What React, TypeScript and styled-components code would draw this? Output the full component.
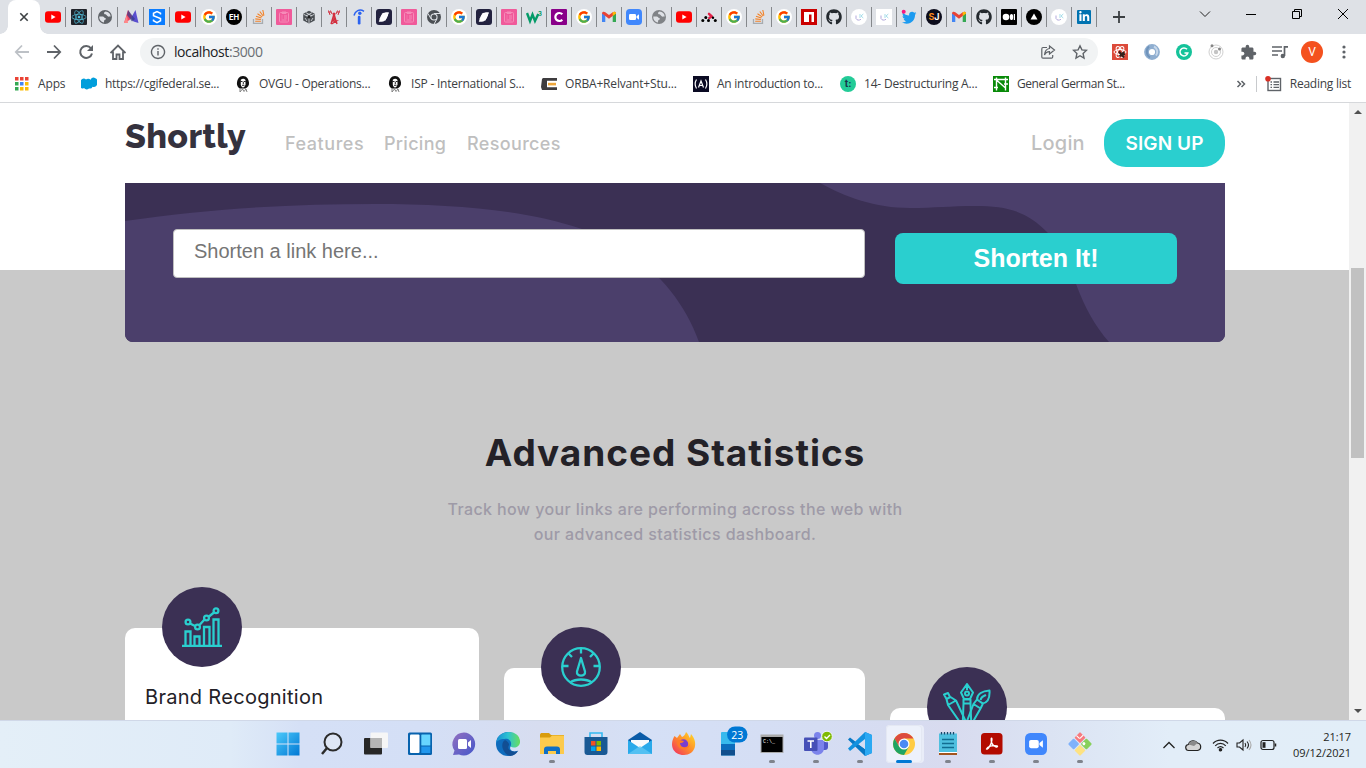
import React from "react";
import styled, { createGlobalStyle } from "styled-components";
import { FaReact, FaGithub, FaTwitter, FaLinkedinIn } from "react-icons/fa";
import { MdExtension } from "react-icons/md";
import { FcGoogle } from "react-icons/fc";

const GlobalStyle = createGlobalStyle`
  * { box-sizing: border-box; }
  body { margin: 0; overflow: hidden; font-family: "Open Sans", "Noto Sans", sans-serif; }
  svg { display: block; flex: none; }
`;

const brandFont = `Inter, "Open Sans", sans-serif`;

const Screen = styled.div`
  width: 1366px;
  height: 768px;
  display: flex;
  flex-direction: column;
  overflow: hidden;
  background: #fff;
`;

/* ---------- browser chrome ---------- */

const TabStrip = styled.div`
  height: 34px;
  flex: none;
  display: flex;
  background: #dee1e6;
`;

const ActiveTab = styled.div`
  width: 32px;
  margin-left: 8px;
  border-radius: 8px 8px 0 0;
  background: #fff;
  display: flex;
  align-items: center;
  justify-content: center;
  position: relative;
  &::before, &::after {
    content: "";
    position: absolute;
    bottom: 0;
    width: 8px;
    height: 8px;
  }
  &::before { left: -8px; background: radial-gradient(circle at 0 0, transparent 7.5px, #fff 8px); }
  &::after { right: -8px; background: radial-gradient(circle at 100% 0, transparent 7.5px, #fff 8px); }
`;

const Tab = styled.div<{ $wide?: boolean }>`
  width: ${(p) => (p.$wide ? 26 : 25)}px;
  padding: 9px 0 0 ${(p) => (p.$wide ? 5 : 4)}px;
  background: linear-gradient(#85888c, #85888c) right 7px / 1px 20px no-repeat;
`;

const NewTab = styled.div`
  width: 44px;
  display: flex;
  align-items: center;
  justify-content: center;
`;

const WindowButtons = styled.div`
  margin-left: auto;
  display: flex;
  padding-bottom: 6px;
`;

const WindowButton = styled.div`
  width: 46px;
  display: flex;
  align-items: center;
  justify-content: center;
`;

const Toolbar = styled.div`
  height: 36px;
  flex: none;
  display: flex;
  align-items: center;
  padding-left: 6px;
`;

const ToolButton = styled.div`
  width: 32px;
  display: flex;
  align-items: center;
  justify-content: center;
`;

const Omnibox = styled.div`
  width: 958px;
  height: 28px;
  margin: 0 6px;
  border-radius: 14px;
  background: #f1f3f4;
  display: flex;
  align-items: center;
  padding: 0 2px 0 10px;
`;

const Address = styled.div`
  flex: 1;
  padding: 0 0 2px 8px;
  font-size: 14px;
  letter-spacing: -0.42px;
  color: #202124;
  span { color: #6a6e73; }
`;

const Avatar = styled.div`
  width: 22px;
  height: 22px;
  border-radius: 50%;
  background: #f4511e;
  color: #fff;
  font: 12px/22px Roboto, sans-serif;
  text-align: center;
`;

const BookmarkBar = styled.div`
  height: 33px;
  flex: none;
  display: flex;
  padding: 0 15px 5px 14px;
  border-bottom: 1px solid #d6d8db;
`;

const Bookmark = styled.div<{ $width?: number; $spacing: number }>`
  width: ${(p) => (p.$width ? p.$width + "px" : "auto")};
  display: flex;
  align-items: center;
  gap: 8px;
  font-size: 12px;
  letter-spacing: ${(p) => p.$spacing}px;
  color: #3c4043;
  white-space: nowrap;
`;

const BookmarkEnd = styled.div`
  margin-left: auto;
  display: flex;
  align-items: center;
`;

const BarDivider = styled.div`
  width: 1px;
  height: 16px;
  margin: 0 8px 0 10px;
  background: #c8cacd;
`;

/* ---------- web page ---------- */

const Viewport = styled.div`
  height: 617px;
  flex: none;
  display: flex;
  overflow: hidden;
`;

const Page = styled.div`
  width: 1349px;
  height: 617px;
  overflow: hidden;
  background: linear-gradient(#fff 167px, #c9c9c9 167px);
`;

const Container = styled.div`
  width: 1100px;
  margin-left: 125px;
`;

const Nav = styled.nav`
  height: 80px;
  display: flex;
  align-items: center;
  font-family: ${brandFont};
`;

const Logo = styled.div`
  width: 160px;
  padding-bottom: 14px;
  font: 800 34px/40px Raleway, Lato, sans-serif;
  letter-spacing: 0.35px;
  color: #35323e;
`;

const NavLink = styled.a<{ $width: number; $size: number; $spacing: number }>`
  width: ${(p) => p.$width}px;
  font-size: ${(p) => p.$size}px;
  font-weight: 500;
  letter-spacing: ${(p) => p.$spacing}px;
  color: #bfbfbf;
`;

const NavEnd = styled.div`
  margin-left: auto;
  display: flex;
  align-items: center;
`;

const SignUp = styled.button`
  width: 121px;
  height: 48px;
  border: 0;
  padding: 0;
  border-radius: 22px;
  background: #2acfcf;
  color: #fff;
  font: 600 19px ${brandFont};
  letter-spacing: 0.1px;
`;

const ShortenPanel = styled.section`
  height: 159px;
  position: relative;
  border-radius: 0 0 8px 8px;
  overflow: hidden;
  background: #3b3054;
`;

const PanelWaves = styled.svg`
  position: absolute;
  inset: 0;
`;

const ShortenForm = styled.div`
  position: relative;
  display: flex;
  gap: 30px;
  padding: 46px 48px 0;
`;

const LinkInput = styled.input`
  width: 692px;
  height: 49px;
  border: 1px solid #bfbfbf;
  border-radius: 4px;
  padding: 0 20px 5px;
  background: #fff;
  font: 20px "Liberation Sans", Arial, sans-serif;
  &::placeholder { color: #757575; }
`;

const ShortenButton = styled.button`
  width: 282px;
  height: 51px;
  margin-top: 4px;
  border: 0;
  border-radius: 8px;
  background: #2acfcf;
  color: #fff;
  font: bold 25px "Liberation Sans", Arial, sans-serif;
`;

const Heading = styled.h2`
  margin: 87px 0 0;
  text-align: center;
  font: 700 37px/48px ${brandFont};
  letter-spacing: 0.95px;
  color: #232127;
`;

const Lead = styled.p`
  margin: 20px 0 0;
  text-align: center;
  font: 500 16px/25px ${brandFont};
  letter-spacing: 0.4px;
  color: #9e9aa7;
`;

const Cards = styled.div`
  display: grid;
  grid-template-columns: 354px 361px 335px;
  gap: 25px;
  align-items: start;
  padding-top: 81px;
`;

const Card = styled.article<{ $drop: number }>`
  position: relative;
  height: 260px;
  margin-top: ${(p) => p.$drop}px;
  padding: 54px 20px 0;
  border-radius: 10px;
  background: #fff;
`;

const CardBadge = styled.div`
  position: absolute;
  top: -41px;
  left: 37px;
  width: 80px;
  height: 80px;
  border-radius: 50%;
  background: #3b3054;
  display: flex;
  align-items: center;
  justify-content: center;
`;

const CardTitle = styled.h3`
  margin: 0;
  font: 400 20px/30px ${brandFont};
  letter-spacing: 0.3px;
  color: #232127;
`;

const ScrollTrack = styled.div`
  width: 17px;
  height: 617px;
  background: #f1f1f1;
  display: flex;
  flex-direction: column;
  align-items: center;
  padding: 6px 0;
`;

const ScrollThumb = styled.div`
  width: 13px;
  height: 190px;
  margin-top: 154px;
  margin-bottom: auto;
  background: #c1c1c1;
`;

/* ---------- taskbar ---------- */

const Taskbar = styled.div`
  height: 48px;
  flex: none;
  display: flex;
  padding-left: 266px;
  border-top: 1px solid #d0d8e8;
  background: linear-gradient(90deg, #e4eff8 0, #dfebf8 230px, #d5e0f6 300px, #d4dff6 420px, #d7ddf0 540px, #d5e0f6 650px, #d5ddf3 820px, #d8dbef 950px, #dbe3f3 1050px, #e2edf8 1170px, #e2eef8 100%);
`;

const TaskItem = styled.div`
  width: 44px;
  height: 47px;
  padding-top: 4px;
  display: flex;
  flex-direction: column;
  align-items: center;
`;

const TaskIcon = styled.div<{ $active?: boolean }>`
  width: 36px;
  height: 38px;
  border-radius: 4px;
  display: flex;
  align-items: center;
  justify-content: center;
  background: ${(p) => (p.$active ? "#edf1fb" : "transparent")};
  box-shadow: ${(p) => (p.$active ? "inset 0 0 0 1px #e4e8f3, 2px 0 0 0 #e9edf8" : "none")};
`;

const Indicator = styled.div<{ $kind: "none" | "open" | "active" }>`
  width: ${(p) => (p.$kind === "active" ? 16 : 6)}px;
  height: 3px;
  margin-top: -3px;
  border-radius: 2px;
  background: ${(p) => (p.$kind === "active" ? "#0078d4" : p.$kind === "open" ? "#7f838c" : "transparent")};
`;

const Tray = styled.div`
  margin-left: auto;
  padding-right: 15px;
  display: flex;
  align-items: center;
`;

const Clock = styled.div`
  width: 68px;
  text-align: right;
  font-size: 11px;
  line-height: 16px;
  letter-spacing: -0.05px;
  color: #1d1f22;
`;

/* ---------- favicons ---------- */

type Fav = { box?: string; round?: number; children?: React.ReactNode };
const Favicon = ({ box, round = 0, children }: Fav) => (
  <svg width="16" height="16" viewBox="0 0 16 16">
    {box && <rect width="16" height="16" rx={round} fill={box} />}
    {children}
  </svg>
);

const iconText = (value: string, fill: string, size: number, x = 8, y = 11) => (
  <text x={x} y={y} fontSize={size} fontWeight="700" fill={fill} textAnchor="middle" fontFamily="Inter, sans-serif">{value}</text>
);

const YouTube = () => (
  <Favicon><rect y="2.3" width="16" height="11.4" rx="3" fill="#f00" /><path d="M6.3 5.6v4.8L10.6 8z" fill="#fff" /></Favicon>
);
const ReactTab = () => <Favicon box="#20232a" round={1}><FaReact x="0.5" y="0.5" size={15} color="#53c1de" /></Favicon>;
const Globe = ({ color = "#5f6368" }: { color?: string }) => (
  <Favicon><circle cx="8" cy="8" r="7" fill={color} />
    <path d="M2.300 7.500h3.500c1.200.2 1.500 1.500 2.700 1.700.8.2.5 1.300-.5 1.500-.8.1-.9.800-1 2.800C4 13 2 10.500 2.300 7.500zM8.500 2.500c-1.200.6-1.800 1.300-1.300 2.300.6 1 1.700.5 2.300 1.200.6.8 1.300 1.800 2.700 1.600l1.500-.2c-.2-2.700-2.200-4.600-5.200-4.900z" fill="#dee1e6" />
  </Favicon>
);
const MTab = () => (
  <Favicon><path d="M1 14 5 1l4 6.500-2.500 3.500z" fill="#ef4565" /><path d="M5 14h-4l3-8z" fill="#f88" /><path d="M8 9l4.500-8L15.500 14l-5-1.500z" fill="#5a4fcf" /><path d="M5 1l7 9-3 2.500L4 6z" fill="#3a3a88" opacity=".75" /></Favicon>
);
const STab = () => (
  <Favicon box="#0a7cff"><path d="M11.500 5.500V4.300L8 2.500 4.500 4.300v2.400L11.500 9.500v2.200L8 13.600l-3.500-1.900v-1.200" fill="none" stroke="#fff" strokeWidth="1.500" /></Favicon>
);
const Google = () => <Favicon box="#fff" round={8}><FcGoogle x="1" y="1" size={14} /></Favicon>;
const EH = () => <Favicon box="#000" round={8}>{iconText("EH", "#fff", 7.5, 8, 10.8)}</Favicon>;
const StackOverflow = () => (
  <Favicon><path d="M2.500 10v4.300h9V10" fill="none" stroke="#a7abb0" strokeWidth="1.300" />
    <path d="M4.200 12.300h5.700M4.300 9.900l5.600.6M5 7.300l5.400 1.800M6.500 4.700l4.700 3.200M8.800 2.500l3.400 4.500M11.800 1l1.100 5.500" stroke="#f48024" strokeWidth="1.100" /></Favicon>
);
const Pink = () => (
  <Favicon box="#f05a9a" round={1}><g fill="none" stroke="#f68bb8" strokeWidth="1"><rect x="3.500" y="3.500" width="9" height="9.500" rx="1" /><path d="M6 3h4v1.500H6zM5.500 7h1M8 7h3M5.500 9h1M8 9h3M5.500 11h5" /></g></Favicon>
);
const Cube = () => (
  <Favicon><path d="M8 1.800l5.800 3v6.700L8 14.600l-5.800-3.100V4.800z" fill="#4b4f54" /><path d="M8 8v6M8 8 2.500 5.200M8 8l5.500-2.800M5 3.700l6 3.200M11 3.700 5 6.900M4 9l2 3M12 9l-2 3" stroke="#dee1e6" strokeWidth=".8" /><circle cx="8" cy="8" r="1.500" fill="#222" /></Favicon>
);
const Tower = () => (
  <Favicon><g fill="none" stroke="#d32f3f"><path d="M8 5 5 15M8 5l3 10M6.500 9h3M6 12h4.500l-5 3M9.500 9l-3 3" strokeWidth="1.400" /><path d="M4.500 1.500 6 5M2.500 1.500 4 6M11.500 1.500 10 5M13.500 1.500 12 6M2 3h3M11 3h3" strokeWidth="1" /></g><circle cx="8" cy="5" r="1.500" fill="#d32f3f" /></Favicon>
);
const Indeed = () => (
  <Favicon><rect x="6.800" y="6.800" width="2.700" height="8.700" rx="1.200" fill="#2b62f0" /><circle cx="8.800" cy="4.300" r="1.700" fill="#2b62f0" /><path d="M3 6.500C4 2 8.500-.5 13 2.300" fill="none" stroke="#2b62f0" strokeWidth="1.500" /></Favicon>
);
const Crescent = () => (
  <Favicon box="#23223f" round={3}><path d="M3.200 9.500C4 5 7 3 12.300 3.200c.8 0 .9.8.4 1.200-.7.700-.6 1.500-.7 2.600C11.600 10.500 9 12.900 3.500 12.800c-.8 0-.9-.8-.3-1.300.5-.6.300-1.200 0-2z" fill="#fff" /><path d="M2.500 9.500c1.500-1 1.300-3.200 3-4.500M13.200 6.300c-1.500 1.200-1.200 3.200-3 4.700" stroke="#23223f" strokeWidth="1.300" fill="none" /></Favicon>
);
const ChromeGray = () => (
  <Favicon><circle cx="8" cy="8" r="7" fill="#4b4f54" /><circle cx="8" cy="8" r="3.600" fill="#dee1e6" /><circle cx="8" cy="8" r="2.500" fill="#4b4f54" /><path d="M8 4.500h6.500M5 9.800 2 4.500M11 9.800l-3 5.400" stroke="#dee1e6" strokeWidth="1" /></Favicon>
);
const W3 = () => (
  <Favicon><path d="M1 4l3 8 2.500-6.500L9 12l3.300-7" fill="none" stroke="#049b68" strokeWidth="2.400" />{iconText("3", "#049b68", 6, 14, 6.5)}</Favicon>
);
const CTab = () => <Favicon box="#890089" round={1}><path d="M11.300 5.300A4 4 0 1 0 11.300 10.700" fill="none" stroke="#fff" strokeWidth="2.200" /></Favicon>;
const Gmail = () => (
  <Favicon><path d="M1 13V4l3.300 2.500V13z" fill="#4285f4" /><path d="M15 13V4l-3.300 2.500V13z" fill="#34a853" /><path d="M1 4.500C1 2.500 3 2.300 4.300 3.300L8 6.100l3.700-2.800C13 2.300 15 2.500 15 4.500L8 9.800z" fill="#ea4335" /><path d="M11.700 3.300C13 2.300 15 2.500 15 4.500L11.700 7z" fill="#fbbc04" /></Favicon>
);
const Zoom = ({ size = 16 }: { size?: number }) => (
  <svg width={size} height={size} viewBox="0 0 16 16"><rect width="16" height="16" rx="3.800" fill="#4087fc" /><rect x="3" y="5" width="7" height="6" rx="1.300" fill="#fff" /><path d="M10.500 7.300 13 5.300v5.400l-2.500-2z" fill="#fff" /></svg>
);
const Router = () => (
  <Favicon><path d="M8 4.800l2.800 2.700L8.300 9" stroke="#e32249" strokeWidth="2.500" strokeLinecap="round" strokeLinejoin="round" fill="none" /><circle cx="1.800" cy="11.500" r="1.500" /><circle cx="4.800" cy="8.500" r="1.500" /><circle cx="7.500" cy="11.500" r="1.500" /><circle cx="12" cy="8.800" r="1.200" /><circle cx="14.300" cy="11.500" r="1.500" /></Favicon>
);
const Npm = () => <Favicon box="#cb0000"><path d="M3 3h10v10h-2.500V5.500H8V13H3z" fill="#fff" /></Favicon>;
const GitHub = () => <Favicon><FaGithub size={16} color="#24292e" /></Favicon>;
const Faint = ({ square }: { square?: boolean }) => (
  <Favicon box="#fff" round={square ? 0 : 8}><path d="M5 6.500v3c1 2 3 2 5 .8" fill="none" stroke="#b3a9dc" strokeWidth="1" /><path d="M9 5v4M12.300 5 10 7l2.300 2" fill="none" stroke="#a5ddea" strokeWidth="1" /></Favicon>
);
const Twitter = () => <Favicon><FaTwitter x="1" y="1.500" size={14.500} color="#1d9bf0" /><circle cx="2.700" cy="2.700" r="2" fill="#f91880" /></Favicon>;
const SJ = () => <Favicon box="#0c0c1c" round={8}>{iconText("S", "#f7861c", 9, 5.4, 11.2)}{iconText("J", "#fff", 9, 10.8, 11.2)}</Favicon>;
const Medium = () => <Favicon box="#000" round={1}><circle cx="5" cy="8" r="3.300" fill="#fff" /><ellipse cx="10.500" cy="8" rx="1.700" ry="3.100" fill="#fff" /><rect x="12.800" y="5" width="1.200" height="6" fill="#fff" /></Favicon>;
const Vercel = () => <Favicon box="#000" round={8}><path d="M8 4.500 11.500 10.500h-7z" fill="#fff" /></Favicon>;
const LinkedIn = () => <Favicon><rect x="1" y="1" width="14" height="14" rx="1" fill="#0073b1" /><FaLinkedinIn x="2.500" y="2" size={11.500} color="#fff" /></Favicon>;

const wideTabs = [YouTube, ReactTab, Globe, MTab, STab, YouTube, Google];
const GlobeLight = () => <Globe color="#808387" />;
const FaintSquare = () => <Faint square />;
const FaintRound = () => <Faint />;
const narrowTabs = [
  EH, StackOverflow, Pink, Cube, Tower, Indeed, Crescent, Pink, ChromeGray, Google, Crescent, Pink,
  W3, CTab, Google, Gmail, Zoom, GlobeLight, YouTube, Router, Google, StackOverflow, Google, Npm,
  GitHub, FaintRound, FaintSquare, Twitter, SJ, Gmail, GitHub, Medium, Vercel, FaintRound, LinkedIn,
];

/* ---------- toolbar and bookmark icons ---------- */

const Line = ({ d, size = 16, color = "#5f6368", width = 1.6 }: { d: string; size?: number; color?: string; width?: number }) => (
  <svg width={size} height={size} viewBox={`0 0 ${size} ${size}`} fill="none" stroke={color} strokeWidth={width}><path d={d} /></svg>
);

const AppsGrid = () => {
  const colors = ["#ea4335", "#ea4335", "#ea4335", "#34a853", "#4285f4", "#fbbc04", "#34a853", "#fbbc04", "#fbbc04"];
  return <Favicon>{colors.map((c, i) => <rect key={i} x={1 + (i % 3) * 5} y={1 + Math.floor(i / 3) * 5} width="3.500" height="3.500" fill={c} />)}</Favicon>;
};
const Salesforce = () => <Favicon><path d="M0 7.500a3.200 3.200 0 0 1 5-3.900 3 3 0 0 1 4.500.2 3.300 3.300 0 0 1 6.500 3.200 3.200 3.200 0 0 1-4.500 3.700 2.800 2.800 0 0 1-3.500 1.700A3.500 3.500 0 0 1 3 12 2.600 2.600 0 0 1 0 7.500z" fill="#009edb" /></Favicon>;
const Portrait = () => (
  <Favicon><path d="M8 0C4 0 2.500 3 2 6.500c-.5 3 1.500 5.500 3 6h5.500c2-1 4-3 3.500-6C13.500 3 12 0 8 0z" fill="#111" /><path d="M5.800 3.800c1.500-1.500 3.500-1.500 4.700.2v4.500c-.5 2-1.500 3-2.500 3S5.800 10 5.800 8.500z" fill="#fff" /><path d="M5.500 5.500h2M8.700 5.500h2M8.300 6v2.200M7 9.300h2.500" stroke="#111" strokeWidth=".9" /><path d="M5 12.500V16l2.500-3L9 15.500l2-2.500 1 3" fill="none" stroke="#777" strokeWidth=".9" /></Favicon>
);
const Orba = () => <Favicon><path d="M2 2h14v2.800H6v6.400h10V14H1L0 11 1 3z" fill="#3e3c3f" /><rect x="7" y="6.800" width="8" height="2.600" fill="#eda63b" /></Favicon>;
const FreeCode = () => <Favicon box="#0a0a23"><path d="M3.500 3.500c-1.800 3-1.800 6 0 9M12.500 3.500c1.800 3 1.800 6 0 9M5.500 11.500 8 5l2.500 6.500M6.300 9.500h3.400" fill="none" stroke="#fff" strokeWidth="1.200" /></Favicon>;
const TealT = () => <Favicon box="#23cb97" round={8}>{iconText("t:", "#17324a", 9.5, 8, 11.3)}</Favicon>;
const German = () => <Favicon box="#088a08"><path d="M1 3.500h14M3.500 1.500v13M12.500 1.500v13M3.500 4l9 8M1 11.500h4M11 8h4" stroke="#fff" strokeWidth="1.400" /></Favicon>;

const bookmarks = [
  { Icon: AppsGrid, label: "Apps", width: 67, spacing: -0.15 },
  { Icon: Salesforce, label: "https://cgifederal.se...", width: 154, spacing: -0.28 },
  { Icon: Portrait, label: "OVGU - Operations...", width: 152, spacing: -0.24 },
  { Icon: Portrait, label: "ISP - International S...", width: 154, spacing: -0.22 },
  { Icon: Orba, label: "ORBA+Relvant+Stu...", width: 152, spacing: -0.17 },
  { Icon: FreeCode, label: "An introduction to...", width: 147, spacing: -0.25 },
  { Icon: TealT, label: "14- Destructuring A...", width: 153, spacing: -0.2 },
  { Icon: German, label: "General German St...", width: 150, spacing: -0.42 },
];

const extensions = [
  <Favicon key="bug" box="#dc4a3a"><g fill="none" stroke="#fff" strokeWidth="1"><ellipse cx="8" cy="8" rx="6" ry="2.500" /><ellipse cx="8" cy="8" rx="6" ry="2.500" transform="rotate(60 8 8)" /><ellipse cx="8" cy="8" rx="6" ry="2.500" transform="rotate(120 8 8)" /></g><path d="M7 7.500l5 6M12 8l-4.500 4.500M8 10.300h5" stroke="#35201c" strokeWidth="2" /></Favicon>,
  <Favicon key="ring"><circle cx="8" cy="8" r="5.500" fill="none" stroke="#8faed0" strokeWidth="4.800" /><path d="M5 2.500a7 7 0 0 0 1 11" fill="none" stroke="#6f93bb" strokeWidth="2" /><path d="M10 2.500a6 6 0 0 1 2 9" fill="none" stroke="#c6d7ea" strokeWidth="2" /></Favicon>,
  <Favicon key="grammar" box="#15c39a" round={8}><path d="M11 5.300A4 4 0 1 0 11.800 9H8.500" fill="none" stroke="#fff" strokeWidth="1.500" /></Favicon>,
  <Favicon key="orbit"><circle cx="8" cy="8" r="7" fill="none" stroke="#d0d0d0" /><circle cx="8" cy="8" r="4.500" fill="none" stroke="#d0d0d0" /><circle cx="8" cy="8" r="2.200" fill="#c4c4c4" /><circle cx="4" cy="1.800" r="1.500" fill="#858585" /><circle cx="11.500" cy="5" r="1.500" fill="#858585" /></Favicon>,
  <MdExtension key="puzzle" size={17} color="#5f6368" />,
  <svg key="queue" width="16" height="16" viewBox="0 0 16 16"><path d="M0 3h10M0 7h10M0 11h6M12.500 12V2.800H16" fill="none" stroke="#5f6368" strokeWidth="1.700" /><circle cx="10.800" cy="12" r="2.200" fill="#5f6368" /></svg>,
];

/* ---------- feature card icons ---------- */

const ChartIcon = () => (
  <svg width="40" height="40" viewBox="0 0 40 40" fill="none" stroke="#2acfcf" strokeWidth="2.300">
    <path d="M0 39h40M3.500 39V24.500h5V39M12.500 39V29.500h5V39M22 39V20h5.500V39M31.500 39V12.500h5V39" />
    <path d="M8 16.500l5 2.500M17.500 18l5-5.500M27 9.500l5-4" />
    <circle cx="6" cy="15" r="2.400" /><circle cx="15.500" cy="20" r="2.400" /><circle cx="24.500" cy="11" r="2.400" /><circle cx="34" cy="3.800" r="2.400" />
  </svg>
);
const GaugeIcon = () => (
  <svg width="40" height="40" viewBox="0 0 40 40" fill="none" stroke="#2acfcf" strokeWidth="2.300">
    <circle cx="20" cy="20" r="18.800" /><path d="M20 1v5.500M1 19h6.500M32.500 19H39M7.500 6.500l3.500 3.500M32.500 6.500 29 10M9 35.500c6-4 16-4 22 0" />
    <path d="M20 11l4 13.500c1 5.500-9 5.500-8 0z" strokeLinejoin="round" />
  </svg>
);
const PensIcon = () => (
  <svg width="48" height="48" viewBox="0 0 48 48" fill="none" stroke="#2acfcf" strokeWidth="2" strokeLinejoin="round">
    <path d="M24 1l6 8.500-3 6.500h-6l-3-6.500zM24 1v6M20.500 16.500h7v4h-7zM20.500 20.500 19.500 47h9L27.500 20.500" /><circle cx="24" cy="10.500" r="2" />
    <path d="M1 11.500l4-1.500 2 4-3.500 2zM3.500 16 7.500 14l5.500 3.500L24 41M3.500 16l1.500 6 16 23M5 22l8-4.500" />
    <path d="M46.500 7.500c-7 .5-12.500 3.500-12.500 9l5.500 4c5.500-1 7.500-5 7-13zM34 16.500l6 4-2.500 5-7-4.500zM30.500 21 21 46M37.500 25.500 27 44M43 12c-2 1-4.500 1-5.500 5" />
  </svg>
);

/* ---------- taskbar icons ---------- */

const Win = ({ children }: { children: React.ReactNode }) => <svg width="24" height="24" viewBox="0 0 24 24" overflow="visible">{children}</svg>;

const taskIcons: { icon: React.ReactNode; kind?: "open" | "active" }[] = [
  { icon: <Win><defs><linearGradient id="w" x1="0" y1="0" x2="1" y2="1"><stop stopColor="#4cc9fa" /><stop offset="1" stopColor="#0078d4" /></linearGradient></defs><path d="M.500.500h11v11H.500zM12.500.500h11v11h-11zM.500 12.500h11v11H.500zM12.500 12.500h11v11h-11z" fill="url(#w)" /></Win> },
  { icon: <Win><circle cx="13" cy="10" r="8.500" fill="#e5eaf3" fillOpacity=".6" stroke="#2b2b2b" strokeWidth="2" /><path d="M7 16l-5 6" stroke="#2b2b2b" strokeWidth="2.500" /></Win> },
  { icon: <Win><rect y="6" width="18" height="16.500" rx="1" fill="#272727" /><rect x="6.500" y=".500" width="17.500" height="15.500" rx="1" fill="#f6f6f6" /><rect x="6.500" y="6" width="11.500" height="10" fill="#b5b5b5" /></Win> },
  { icon: <Win><rect y=".500" width="24" height="22.500" rx="1.500" fill="#0863ae" /><rect x="2" y="2.500" width="9.500" height="18.500" rx="1" fill="#fff" /><rect x="13.300" y="2.500" width="9" height="11" rx=".5" fill="#67d5ff" /><path d="M13.300 14.500h9V21h-9z" fill="#2197ed" /></Win> },
  { icon: <Win><defs><linearGradient id="m" x1="0" y1="0" x2="1" y2="1"><stop stopColor="#9370c0" /><stop offset="1" stopColor="#4457ca" /></linearGradient></defs><path d="M12 .500A11.500 11.500 0 1 1 7 22.500L1 23l1.500-4.500A11.500 11.500 0 0 1 12 .500z" fill="url(#m)" /><rect x="6" y="7" width="9" height="10" rx="1.500" fill="#fff" /><path d="M16 10.500l3-2.500v8l-3-2.500z" fill="#fff" /></Win> },
  { icon: <Win><defs><linearGradient id="e" x1="0" x2="1"><stop stopColor="#168bd3" /><stop offset=".5" stopColor="#2cc3d2" /><stop offset="1" stopColor="#6ade5c" /></linearGradient></defs><circle cx="12" cy="12" r="12" fill="#0f6cbd" /><path d="M24.500 10v8l-3.500 1c-5 1.500-8-1.500-6.500-4.500z" fill="#d5e0f6" /><path d="M0 12C0-3 24-4 24 10c0 5-6 7-9.500 4.500 2-4.500-1-8.500-6-7.500C4 7 0 9 0 12z" fill="url(#e)" /><path d="M9 8c-5 3-3 13 5 16 4-.5 6-2 8-5-5 2-12-1-9-6 .5-2-2-4-4-5z" fill="#124e93" /></Win> },
  { icon: <Win><path d="M0 3c0-1.500 1-2 2-2h7l2 2h13v8H0z" fill="#d99c0b" /><path d="M0 5.500h10l2-2h12V22H0z" fill="#fcca4c" /><path d="M4 17.500c0-2 1-3 3-3h10c2 0 3 1 3 3V22h-4v-3H8v3H4z" fill="#0f6fc6" /></Win>, kind: "open" },
  { icon: <Win><path d="M6 6V1h12v5" fill="none" stroke="#35b9f1" strokeWidth="1.600" /><path d="M.500 5h23v15a3 3 0 0 1-3 3h-17a3 3 0 0 1-3-3z" fill="#195994" /><path d="M7 9h4.500v4.500H7z" fill="#f25022" /><path d="M12.500 9H17v4.500h-4.500z" fill="#7fba00" /><path d="M7 14.500h4.500V19H7z" fill="#00a4ef" /><path d="M12.500 14.500H17V19h-4.500z" fill="#ffb900" /></Win> },
  { icon: <Win><path d="M12 0l12 8v14H0V8z" fill="#0a5ba7" /><path d="M3 8h18v8H3z" fill="#f7f9fc" /><path d="M0 8l12 8 12-8v14H0z" fill="#29a9ea" /><path d="M0 22l12-8 12 8z" fill="#65caf5" opacity=".7" /></Win> },
  { icon: <Win><defs><linearGradient id="f" x1="1" y1="0" x2="0" y2="1"><stop stopColor="#ffe226" /><stop offset=".5" stopColor="#ff8a2c" /><stop offset="1" stopColor="#ef2869" /></linearGradient></defs><path d="M2.500 4l2.500 2 3-4 2 3c2-1 3-2 4-5 3 3 3 5 4 6l1-4c8 9 4 21-7 21C1 23-3 13 2.500 4z" fill="url(#f)" /><circle cx="11.500" cy="12" r="4.700" fill="#7a3ed0" /><path d="M5 9c3-2 5 0 7 0-1 2-3 2-4 2 0 5 7 6 10 1-1 8-14 7-13-3z" fill="#ff7b28" /></Win> },
  { icon: <Win><rect x="5" y="0" width="14" height="23.500" rx="1" fill="#38b9ed" /><path d="M5 12h14v11H5z" fill="#0c6cbd" /><path d="M5 18h14v5.500H5z" fill="#114f8d" /><rect x="11" y="-5.500" width="20.500" height="16" rx="8" fill="#0078d4" /><text x="21.300" y="6.500" fontSize="10.500" fill="#fff" textAnchor="middle" fontFamily="Open Sans, sans-serif">23</text></Win> },
  { icon: <Win><rect x=".500" y="2.500" width="23" height="18.500" fill="#aaa" /><rect x="1.500" y="5" width="21" height="15" fill="#000" /><text x="3" y="11" fontSize="5" fill="#fff" fontFamily="Liberation Mono, monospace">C:\_</text></Win>, kind: "open" },
  { icon: <Win><circle cx="13.500" cy="3.500" r="3.500" fill="#7b83eb" /><rect x="13" y="8" width="11" height="10" rx="3" fill="#5059c9" /><path d="M7 8h13v8c0 9-13 9-13 0z" fill="#7b83eb" /><rect x="0" y="5.500" width="13.500" height="13.500" rx="1" fill="#4650b7" /><path d="M3.500 9h6.500M6.800 9v7" stroke="#fff" strokeWidth="1.600" /><circle cx="23" cy="4.500" r="5.300" fill="#7fba00" stroke="#edf1fa" /><path d="M20.500 4.500l2 2 3.500-3.500" fill="none" stroke="#fff" strokeWidth="1.400" /></Win>, kind: "open" },
  { icon: <Win><path d="M17 0l7 3v18l-7 3L0 7.500l2-2 15 11.500z" fill="#0878c5" /><path d="M17 0l7 3v18l-7 3z" fill="#2ba9f3" /><path d="M17 7v10l-7-5z" fill="#d6def2" /><path d="M17 0L0 16.500l2 2.500L17 7z" fill="#1492df" /></Win>, kind: "open" },
  { icon: <Win><circle cx="12" cy="12" r="11" fill="#fc4" /><path d="M2.500 6.500A11 11 0 0 1 21.500 6.500H12L7.300 15z" fill="#dc4b3e" /><path d="M2.500 6.500A11 11 0 0 0 12 23l4.800-8.300-9.600 0z" fill="#1fa463" /><circle cx="12" cy="12" r="5.500" fill="#fff" /><circle cx="12" cy="12" r="4.300" fill="#4a8af4" /></Win>, kind: "active" },
  { icon: <Win><rect x="3" y="1.500" width="18" height="21" fill="#4fc0df" /><path d="M3 20.500h18V23H3z" fill="#a2541e" /><path d="M3 20h18v1H3z" fill="#fff" /><path d="M6 7.500h12M6 11.500h12M6 15.500h12" stroke="#126d91" strokeWidth="1.500" /><path d="M5.500 0v2.500M8.500 0v2.500M11.500 0v2.500M14.500 0v2.500M17.500 0v2.500" stroke="#17496b" strokeWidth="1.300" /></Win>, kind: "open" },
  { icon: <Win><rect x="1" y="1" width="21.500" height="21.500" rx="3.500" fill="#b30b00" /><path d="M6.500 17c1.200-2.200 5-3.700 10.500-3.200 1.500.8-.5 1.700-2 .7-2.500-1.500-4.200-4.500-3.800-8 .8-1.200 1.300 1.500-.2 5-1.200 3-3.500 6.500-4.500 5.500z" fill="none" stroke="#fff" strokeWidth="1.300" /></Win>, kind: "open" },
  { icon: <Zoom size={22} />, kind: "open" },
  { icon: <Win><g transform="rotate(45 12 12)"><rect x="3.500" y="3.500" width="8" height="8" rx="1" fill="#f77b7f" /><rect x="12.500" y="3.500" width="8" height="8" rx="1" fill="#88d05c" /><rect x="3.500" y="12.500" width="8" height="8" rx="1" fill="#7fb2fb" /><rect x="12.500" y="12.500" width="8" height="8" rx="1" fill="#fde283" /><path d="M3.500 8.500h4.500M8 3.500V8" stroke="#fff" strokeWidth="1.100" /><circle cx="14.500" cy="9" r="1.500" fill="#fff" /></g></Win>, kind: "open" },
];

const TrayIcon = styled.div<{ $width: number }>`
  width: ${(p) => p.$width}px;
  display: flex;
  justify-content: center;
`;

export default function App() {
  return (
    <Screen>
      <GlobalStyle />
      <TabStrip>
        <ActiveTab><Line d="M4.300 4.300l7.400 7.400M11.700 4.300l-7.400 7.400" color="#3c4043" /></ActiveTab>
        {wideTabs.map((Icon, i) => <Tab $wide key={i}><Icon /></Tab>)}
        {narrowTabs.map((Icon, i) => <Tab key={i}><Icon /></Tab>)}
        <NewTab><Line d="M8 2v12M2 8h12" color="#3c4043" width={1.8} /></NewTab>
        <WindowButtons>
          <WindowButton><Line d="M3 5.500l5 5 5-5" color="#222" width={1} /></WindowButton>
          <WindowButton><Line d="M3 8.500h10" color="#000" width={1} /></WindowButton>
          <WindowButton><Line d="M3.500 5.500h7v7h-7zM5.500 5.500v-2h7v7h-2" color="#000" width={1} /></WindowButton>
          <WindowButton><Line d="M3 3l10 10M13 3 3 13" color="#000" width={1} /></WindowButton>
        </WindowButtons>
      </TabStrip>

      <Toolbar>
        <ToolButton><Line d="M15 8H2M8 1.500 1.800 8 8 14.500" color="#bdc1c6" width={1.800} /></ToolButton>
        <ToolButton><Line d="M1 8h13M8 1.500 14.200 8 8 14.500" width={1.800} /></ToolButton>
        <ToolButton><svg width="16" height="16" viewBox="0 0 16 16"><path d="M13 4.300A6 6 0 1 0 14 9.500" fill="none" stroke="#5f6368" strokeWidth="2" /><path d="M15 1v6H9z" fill="#5f6368" /></svg></ToolButton>
        <ToolButton><Line d="M.500 9 8 1.500 15.500 9M3 7.500V15h3.500v-4.500h3V15H13V7.500" width={1.8} /></ToolButton>
        <Omnibox>
          <Line d="M8 1.500a6.500 6.500 0 1 0 .01 0M8 7v4.500M8 4.300v1.500" width={1.4} />
          <Address>localhost<span>:3000</span></Address>
          <ToolButton><Line d="M7 3.500H3Q1.800 3.500 1.800 5v8q0 1.200 1.200 1.200h8.500q1.200 0 1.200-1.200v-2M9.500 2l5 4-5 4V7.700Q6 7.700 4.500 11 5 5 9.500 4.500z" width={1.2} /></ToolButton>
          <ToolButton><Line d="M8 1.800l1.900 4.100 4.500.5-3.300 3.100.9 4.500-4-2.300L4 14l.9-4.500L1.600 6.400l4.500-.5z" width={1.4} /></ToolButton>
        </Omnibox>
        {extensions.map((icon, i) => <ToolButton key={i}>{icon}</ToolButton>)}
        <ToolButton><Avatar>V</Avatar></ToolButton>
        <ToolButton><svg width="16" height="16" viewBox="0 0 16 16" fill="#5f6368"><circle cx="8" cy="3" r="1.600" /><circle cx="8" cy="8" r="1.600" /><circle cx="8" cy="13" r="1.600" /></svg></ToolButton>
      </Toolbar>

      <BookmarkBar>
        {bookmarks.map(({ Icon, label, width, spacing }) => (
          <Bookmark key={label} $width={width} $spacing={spacing}><Icon />{label}</Bookmark>
        ))}
        <BookmarkEnd>
          <Line size={10} d="M1.500 2 4.500 5 1.500 8M5.500 2 8.500 5 5.500 8" width={1.500} />
          <BarDivider />
          <Bookmark $spacing={-0.25}>
            <svg width="17" height="16" viewBox="0 0 17 16"><rect x="3" y="2.500" width="12.500" height="12" fill="none" stroke="#5f6368" strokeWidth="1.400" /><path d="M5.500 6h1.500M8.500 6H14M5.500 8.700h1.500M8.500 8.700H14M5.500 11.400h1.500M8.500 11.400H14" stroke="#5f6368" strokeWidth="1.300" /><circle cx="3" cy="2.800" r="2.800" fill="#d93025" /></svg>
            Reading list
          </Bookmark>
        </BookmarkEnd>
      </BookmarkBar>

      <Viewport>
        <Page>
          <Container>
            <Nav>
              <Logo>Shortly</Logo>
              <NavLink $width={99} $size={18} $spacing={0.55}>Features</NavLink>
              <NavLink $width={83} $size={18} $spacing={0.3}>Pricing</NavLink>
              <NavLink $width={100} $size={18} $spacing={0.35}>Resources</NavLink>
              <NavEnd>
                <NavLink $width={73} $size={20} $spacing={0.2}>Login</NavLink>
                <SignUp>SIGN UP</SignUp>
              </NavEnd>
            </Nav>
            <ShortenPanel>
              <PanelWaves width="1100" height="159" viewBox="0 0 1100 159" fill="#4b3f6b">
                <path d="M0 38C90 25 170 21 250 21C330 21 400 27 457 46C500 60 552 97 574 159H0z" />
                <path d="M695 0C720 14 750 25 785 25C810 25 825 23 850 23C882 23 902 28 923 50C936 70 945 85 951 101C960 125 970 143 984 159H1100V0z" />
              </PanelWaves>
              <ShortenForm>
                <LinkInput placeholder="Shorten a link here..." />
                <ShortenButton>Shorten It!</ShortenButton>
              </ShortenForm>
            </ShortenPanel>
            <Heading>Advanced Statistics</Heading>
            <Lead>Track how your links are performing across the web with<br />our advanced statistics dashboard.</Lead>
            <Cards>
              <Card $drop={0}><CardBadge><ChartIcon /></CardBadge><CardTitle>Brand Recognition</CardTitle></Card>
              <Card $drop={40}><CardBadge><GaugeIcon /></CardBadge></Card>
              <Card $drop={80}><CardBadge><PensIcon /></CardBadge></Card>
            </Cards>
          </Container>
        </Page>
        <ScrollTrack>
          <svg width="8" height="5" viewBox="0 0 8 5"><path d="M0 5 4 1l4 4z" fill="#505050" /></svg>
          <ScrollThumb />
          <svg width="8" height="5" viewBox="0 0 8 5"><path d="M0 0l4 4 4-4z" fill="#505050" /></svg>
        </ScrollTrack>
      </Viewport>

      <Taskbar>
        {taskIcons.map(({ icon, kind }, i) => (
          <TaskItem key={i}>
            <TaskIcon $active={kind === "active"}>{icon}</TaskIcon>
            <Indicator $kind={kind ?? "none"} />
          </TaskItem>
        ))}
        <Tray>
          <TrayIcon $width={20}><Line d="M2.500 11 8 5.500l5.500 5.500" color="#222" width={1.3} /></TrayIcon>
          <TrayIcon $width={28}><svg width="17" height="14" viewBox="0 0 17 14"><path d="M4 12.500a3 3 0 0 1-.5-6 5 5 0 0 1 9-1.500 3.800 3.800 0 0 1 0 7.500z" fill="#d5d5d5" stroke="#222" strokeWidth="1.200" /><path d="M3.500 6.500a5 5 0 0 1 9-1.500L9 8z" fill="#8a8a8a" /></svg></TrayIcon>
          <TrayIcon $width={27}><svg width="17" height="16" viewBox="0 0 17 16" fill="none" stroke="#222" strokeWidth="1.200"><path d="M1 6.500c4-4.600 11-4.600 15 0M3.200 8.800c3-3.200 7.600-3.200 10.600 0M5.500 11c2-1.900 4-1.900 6 0" /><circle cx="8.500" cy="12.700" r="1.200" fill="#222" /></svg></TrayIcon>
          <TrayIcon $width={20}><svg width="16" height="16" viewBox="0 0 16 16" fill="none" stroke="#222" strokeWidth="1.100"><path d="M1 6v4h2.500L7 13V3L3.500 6zM9 6q1.500 2 0 4M11 4.500q3 3.500 0 7" /><path d="M13 3q4 5 0 10" stroke="#aaa" /></svg></TrayIcon>
          <TrayIcon $width={29}><svg width="17" height="12" viewBox="0 0 17 12"><rect x="1" y="1.500" width="13" height="9" rx="2" fill="none" stroke="#222" strokeWidth="1.200" /><rect x="2.500" y="3.200" width="3" height="5.600" fill="#222" /><path d="M15.500 4.500v3" stroke="#222" strokeWidth="1.500" /></svg></TrayIcon>
          <Clock>21:17<br />09/12/2021</Clock>
        </Tray>
      </Taskbar>
    </Screen>
  );
}
